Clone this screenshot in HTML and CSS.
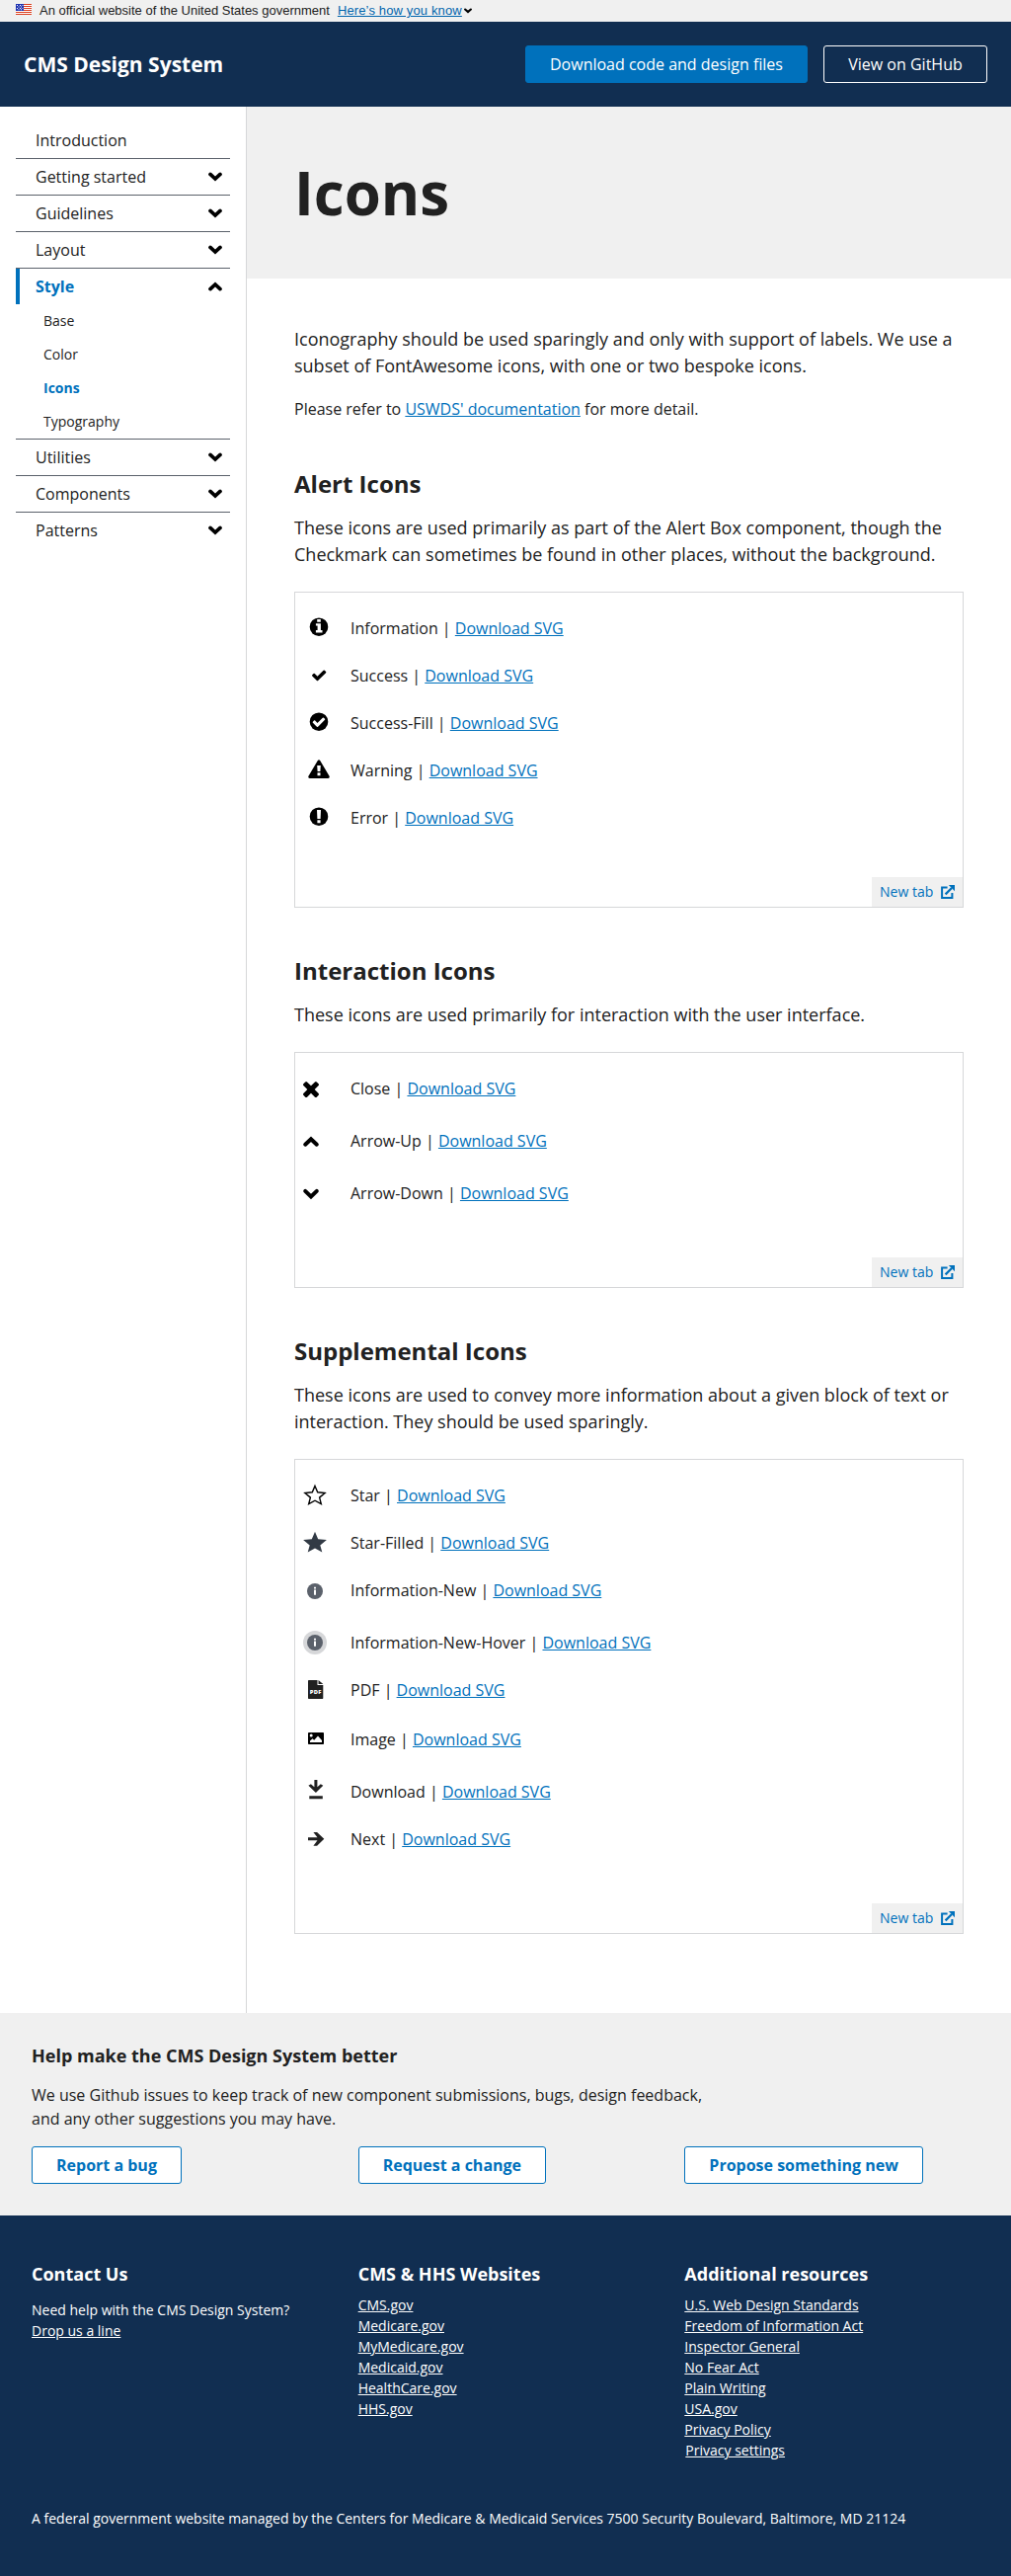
FILE: index.html
```html
<!DOCTYPE html>
<html lang="en">
<head>
<meta charset="utf-8">
<title>Icons - CMS Design System</title>
<link rel="stylesheet" href="styles.css">
</head>
<body>
<svg class="sprite" aria-hidden="true">
  <symbol id="chevron-down" viewBox="0 0 14 10"><path d="M2 2.4 7 7l5-4.6" fill="none" stroke="#000" stroke-width="3.7" stroke-linecap="round"/></symbol>
  <symbol id="external" viewBox="0 0 14 14"><path d="M6.600 2.600H1.100v10.300h10.300V8" fill="none" stroke="currentColor" stroke-width="2"/><path d="M4.600 9.400 11 3" fill="none" stroke="currentColor" stroke-width="2.200"/><path d="M7.800 0H14v6.200z" fill="currentColor"/></symbol>
</svg>

<div class="banner">
  <svg class="banner-flag" viewBox="0 0 16 11">
    <path fill="#fff" d="M0 0h16v11H0z"/>
    <path fill="#db3e1f" d="M0 0h16v1H0zM0 2h16v1H0zM0 4h16v1H0zM0 6h16v1H0zM0 8h16v1H0zM0 10h16v1H0z"/>
    <path fill="#1e33b1" d="M0 0h8v7H0z"/>
    <path fill="#fff" d="M1 1h1v1H1zM4 1h1v1H4zM6.500 1h.8v1h-.8zM2.500 2.500h1v1h-1zM5 2.500h1v1H5zM1 4h1v1H1zM4 4h1v1H4zM6.500 4h.8v1h-.8zM2.500 5.300h1v1h-1zM5 5.300h1v1H5z"/>
  </svg>
  <span class="banner-text">An official website of the United States government</span>
  <a class="banner-link" href="#">Here’s how you know</a>
  <svg class="banner-chevron"><use href="#chevron-down"/></svg>
</div>

<header class="header">
  <div class="header-title">CMS Design System</div>
  <div class="header-actions">
    <a class="button button-primary" href="#">Download code and design files</a>
    <a class="button button-inverse" href="#">View on GitHub</a>
  </div>
</header>

<div class="layout">
  <nav class="sidebar">
    <ul class="nav">
      <li><a class="nav-item" href="#">Introduction</a></li>
      <li><a class="nav-item" href="#">Getting started<svg class="nav-chevron"><use href="#chevron-down"/></svg></a></li>
      <li><a class="nav-item" href="#">Guidelines<svg class="nav-chevron"><use href="#chevron-down"/></svg></a></li>
      <li><a class="nav-item" href="#">Layout<svg class="nav-chevron"><use href="#chevron-down"/></svg></a></li>
      <li>
        <a class="nav-item nav-item-current" href="#">Style<svg class="nav-chevron nav-chevron-open"><use href="#chevron-down"/></svg></a>
        <ul class="subnav">
          <li><a class="subnav-item" href="#">Base</a></li>
          <li><a class="subnav-item" href="#">Color</a></li>
          <li><a class="subnav-item subnav-item-current" href="#">Icons</a></li>
          <li><a class="subnav-item" href="#">Typography</a></li>
        </ul>
      </li>
      <li><a class="nav-item" href="#">Utilities<svg class="nav-chevron"><use href="#chevron-down"/></svg></a></li>
      <li><a class="nav-item" href="#">Components<svg class="nav-chevron"><use href="#chevron-down"/></svg></a></li>
      <li><a class="nav-item" href="#">Patterns<svg class="nav-chevron"><use href="#chevron-down"/></svg></a></li>
    </ul>
  </nav>

  <main class="main">
    <div class="hero"><h1>Icons</h1></div>
    <div class="content">
      <p class="lead">Iconography should be used sparingly and only with support of labels. We use a subset of FontAwesome icons, with one or two bespoke icons.</p>
      <p class="note">Please refer to <a href="#">USWDS' documentation</a> for more detail.</p>

      <section class="section">
        <h2>Alert Icons</h2>
        <p class="lead">These icons are used primarily as part of the Alert Box component, though the Checkmark can sometimes be found in other places, without the background.</p>
        <div class="example">
          <ul class="icons icons-alert">
            <li><svg class="icon" viewBox="0 0 24 24"><circle cx="12" cy="10.700" r="9.300"/><path fill="#fff" d="M10.200 3h3.600v2.700h-3.600zM8.900 7.200h5v6.800h1.600v2.400H8.900V14h1.700V9.600H8.900z"/></svg><span>Information | <a href="#">Download SVG</a></span></li>
            <li><svg class="icon" viewBox="0 0 24 24"><path transform="translate(3.900 3.300) scale(.00923)" d="M1671 566q0 40-28 68l-724 724-136 136q-28 28-68 28t-68-28l-136-136-362-362q-28-28-28-68t28-68l136-136q28-28 68-28t68 28l294 295 656-657q28-28 68-28t68 28l136 136q28 28 28 68z"/></svg><span>Success | <a href="#">Download SVG</a></span></li>
            <li><svg class="icon" viewBox="0 0 24 24"><circle cx="12" cy="10.700" r="9.300"/><path fill="#fff" transform="translate(4.700 3.700) scale(.0081)" d="M1671 566q0 40-28 68l-724 724-136 136q-28 28-68 28t-68-28l-136-136-362-362q-28-28-28-68t28-68l136-136q28-28 68-28t68 28l294 295 656-657q28-28 68-28t68 28l136 136q28 28 28 68z"/></svg><span>Success-Fill | <a href="#">Download SVG</a></span></li>
            <li><svg class="icon" viewBox="0 0 24 24"><path d="M10.800 1.900q1.200-1.400 2.400 0l9.500 16.200q.6 1.700-1.200 1.900h-19q-1.800-.2-1.200-1.900z"/><path fill="#fff" d="M10.200 7h3.600l-.4 6h-2.800zM10.500 14.300h3v2.900h-3z"/></svg><span>Warning | <a href="#">Download SVG</a></span></li>
            <li><svg class="icon" viewBox="0 0 24 24"><circle cx="12" cy="10.700" r="9.300"/><path fill="#fff" d="M10 4h4l-.4 8.900h-3.200zM10.400 14.200h3.200v3h-3.200z"/></svg><span>Error | <a href="#">Download SVG</a></span></li>
          </ul>
          <a class="new-tab" href="#">New tab<svg class="new-tab-icon"><use href="#external"/></svg></a>
        </div>
      </section>

      <section class="section">
        <h2>Interaction Icons</h2>
        <p class="lead">These icons are used primarily for interaction with the user interface.</p>
        <div class="example">
          <ul class="icons icons-interaction">
            <li><svg class="icon" viewBox="0 0 24 24"><path transform="translate(-.07 .07) scale(.01347)" d="M1490 1322q0 40-28 68l-136 136q-28 28-68 28t-68-28l-294-294-294 294q-28 28-68 28t-68-28l-136-136q-28-28-28-68t28-68l294-294-294-294q-28-28-28-68t28-68l136-136q28-28 68-28t68 28l294 294 294-294q28-28 68-28t68 28l136 136q28 28 28 68t-28 68l-294 294 294 294q28 28 28 68z"/></svg><span>Close | <a href="#">Download SVG</a></span></li>
            <li><svg class="icon icon-line" viewBox="0 0 24 24"><path stroke-width="4" d="M6.200 15.700 12 10.200l5.800 5.500"/></svg><span>Arrow-Up | <a href="#">Download SVG</a></span></li>
            <li><svg class="icon icon-line" viewBox="0 0 24 24"><path stroke-width="4" d="M6.200 9.900 12 15.400l5.800-5.500"/></svg><span>Arrow-Down | <a href="#">Download SVG</a></span></li>
          </ul>
          <a class="new-tab" href="#">New tab<svg class="new-tab-icon"><use href="#external"/></svg></a>
        </div>
      </section>

      <section class="section">
        <h2>Supplemental Icons</h2>
        <p class="lead">These icons are used to convey more information about a given block of text or interaction. They should be used sparingly.</p>
        <div class="example">
          <ul class="icons icons-supplemental">
            <li><svg class="icon" viewBox="0 0 24 24"><path fill="none" stroke="#000" stroke-width="1.400" d="m12 2.400 2.700 6.400 7.400.7-5.500 4.600 1.700 6.600-6.300-3.500-6.300 3.500 1.700-6.600-5.500-4.600 7.400-.7z"/></svg><span>Star | <a href="#">Download SVG</a></span></li>
            <li><svg class="icon" viewBox="0 0 24 24"><path fill="#323a45" d="m12 .7 3.200 7.500 8.700.8-6.600 5.400 2 7.200-7.300-4-7.300 4 2-7.200L.1 9l8.700-.8z"/></svg><span>Star-Filled | <a href="#">Download SVG</a></span></li>
            <li><svg class="icon" viewBox="0 0 24 24"><circle cx="12" cy="13" r="8" fill="#5b616b"/><path fill="#fff" d="M11 8.800h2v1.700h-2zM11 11.400h2v5.300h-2z"/></svg><span>Information-New | <a href="#">Download SVG</a></span></li>
            <li class="space-large"><svg class="icon" viewBox="0 0 24 24"><circle cx="12" cy="12" r="12" fill="#d6d7d9"/><circle cx="12" cy="12" r="8" fill="#5b616b"/><path fill="#fff" d="M11 7.800h2v1.700h-2zM11 10.400h2v5.300h-2z"/></svg><span>Information-New-Hover | <a href="#">Download SVG</a></span></li>
            <li><svg class="icon" viewBox="0 0 24 24"><path fill="#212121" d="M5.800 2h8.700v5h5.800v13.300q0 .7-.7.700H5.800q-.8 0-.8-.7V2.700q0-.7.800-.7zM15.500 2l4.800 4h-4.800z"/><text class="icon-label" x="12.800" y="15.900" text-anchor="middle">PDF</text></svg><span>PDF | <a href="#">Download SVG</a></span></li>
            <li class="space-medium"><svg class="icon" viewBox="0 0 24 24"><rect x="5" y="5" width="16" height="12" rx=".8"/><circle cx="8.200" cy="8" r="1.500" fill="#fff"/><path fill="#fff" d="M7 15v-1.500l2.500-2.300 1.700 1.500L15 8.500l4 4.500v2z"/></svg><span>Image | <a href="#">Download SVG</a></span></li>
            <li class="space-large"><svg class="icon" viewBox="0 0 24 24"><path fill="#212121" d="M11.400 0h3v7.200l3.400-3 2.500 1.600-7.400 7.200-7.500-7.200 2.500-1.600 3.500 3zM6.300 16.300h13.500v3H6.300z"/></svg><span>Download | <a href="#">Download SVG</a></span></li>
            <li><svg class="icon" viewBox="0 0 24 24"><path fill="#212121" d="M5 10.300h9.500L10.400 5h3.700l7.200 6.800-7.200 6.900h-3.700l4.100-5.400H5z"/></svg><span>Next | <a href="#">Download SVG</a></span></li>
          </ul>
          <a class="new-tab" href="#">New tab<svg class="new-tab-icon"><use href="#external"/></svg></a>
        </div>
      </section>
    </div>
  </main>
</div>

<section class="feedback">
  <h3>Help make the CMS Design System better</h3>
  <p>We use Github issues to keep track of new component submissions, bugs, design feedback, and any other suggestions you may have.</p>
  <div class="columns">
    <div><a class="button button-outline" href="#">Report a bug</a></div>
    <div><a class="button button-outline" href="#">Request a change</a></div>
    <div><a class="button button-outline" href="#">Propose something new</a></div>
  </div>
</section>

<footer class="footer">
  <div class="columns footer-columns">
    <div>
      <h3>Contact Us</h3>
      <p class="footer-contact">Need help with the CMS Design System?<br><a href="#">Drop us a line</a></p>
    </div>
    <div>
      <h3>CMS &amp; HHS Websites</h3>
      <ul>
        <li><a href="#">CMS.gov</a></li>
        <li><a href="#">Medicare.gov</a></li>
        <li><a href="#">MyMedicare.gov</a></li>
        <li><a href="#">Medicaid.gov</a></li>
        <li><a href="#">HealthCare.gov</a></li>
        <li><a href="#">HHS.gov</a></li>
      </ul>
    </div>
    <div>
      <h3>Additional resources</h3>
      <ul>
        <li><a href="#">U.S. Web Design Standards</a></li>
        <li><a href="#">Freedom of Information Act</a></li>
        <li><a href="#">Inspector General</a></li>
        <li><a href="#">No Fear Act</a></li>
        <li><a href="#">Plain Writing</a></li>
        <li><a href="#">USA.gov</a></li>
        <li><a href="#">Privacy Policy</a></li>
        <li class="privacy-settings"><a href="#">Privacy settings</a></li>
      </ul>
    </div>
  </div>
  <p class="footer-address">A federal government website managed by the Centers for Medicare &amp; Medicaid Services 7500 Security Boulevard, Baltimore, MD 21124</p>
</footer>
</body>
</html>
```
FILE: styles.css
```css
* { box-sizing: border-box; }

body {
  margin: 0;
  background: #fff;
  color: #212121;
  font: 16px/24px "Open Sans", sans-serif;
}

h1, h2, h3, p, ul { margin: 0; padding: 0; }
ul { list-style: none; }
svg { display: block; flex: none; }
a { color: #0071bc; }

.sprite { width: 0; height: 0; position: absolute; }

/* Government banner */
.banner {
  display: flex;
  align-items: center;
  height: 22px;
  padding: 0 16px;
  background: #f0f0f0;
  font: 13px/16px "Liberation Sans", Arial, sans-serif;
  white-space: nowrap;
}
.banner-flag { width: 16px; height: 11px; margin: -3px 8px 0 0; }
.banner-link { margin-left: 8px; color: #0065ad; letter-spacing: .14px; }
.banner-chevron { width: 8px; height: 6px; margin-left: 2px; }

/* Header */
.header {
  display: flex;
  align-items: center;
  justify-content: space-between;
  height: 86px;
  padding: 0 24px;
  background: #112e51;
}
.header-title { color: #fff; font-size: 21px; font-weight: 700; }
.header-actions { display: flex; gap: 16px; }

.button {
  display: inline-block;
  height: 38px;
  padding: 6px 24px;
  border: 1px solid #0071bc;
  border-radius: 3px;
  text-align: center;
  text-decoration: none;
  white-space: nowrap;
}
.button-primary { width: 286px; background: #0071bc; color: #fff; }
.button-inverse { width: 166px; border-color: #fff; color: #fff; }
.button-outline { background: #fff; font-weight: 700; }

/* Layout */
.layout { display: flex; }
.sidebar {
  width: 250px;
  flex: none;
  padding: 16px 16px 0;
  border-right: 1px solid #d6d7d9;
}
.nav > li + li { border-top: 1px solid #5b616b; }
.nav-item {
  display: flex;
  align-items: center;
  justify-content: space-between;
  height: 36px;
  padding: 0 8px 0 20px;
  color: #212121;
  text-decoration: none;
}
.nav-item-current {
  padding-left: 16px;
  border-left: 4px solid #0071bc;
  color: #0071bc;
  font-weight: 700;
}
.nav-chevron { width: 14px; height: 10px; }
.nav-chevron-open { transform: rotate(180deg); }
.subnav-item {
  display: flex;
  align-items: center;
  height: 34px;
  padding-left: 28px;
  color: #212121;
  font-size: 14px;
  text-decoration: none;
}
.subnav-item-current { color: #0071bc; font-weight: 700; }

.main { flex: 1; min-width: 0; }
.hero {
  display: flex;
  align-items: center;
  height: 174px;
  padding: 0 48px;
  background: #f0f0f0;
}
h1 { font-size: 60px; line-height: 78px; font-weight: 700; }
.content { padding: 48px 48px 80px; }
.lead { font-size: 18px; line-height: 27px; }
.note { margin-top: 18px; }

.section { margin-top: 48px; }
.section h2 { margin-bottom: 16px; font-size: 24px; line-height: 31px; font-weight: 700; }

/* Example box */
.example {
  display: flex;
  flex-direction: column;
  margin-top: 24px;
  padding-top: 24px;
  border: 1px solid #d6d7d9;
}
.icons { --slot: 48px; --row-gap: 24px; margin-bottom: 48px; }
.icons-interaction { --slot: 32px; --row-gap: 29px; margin-bottom: 53px; }
.icons-supplemental { --slot: 40px; margin-bottom: 53px; }
.icons li {
  display: grid;
  grid-template-columns: var(--slot) 1fr;
  align-items: center;
  column-gap: calc(56px - var(--slot));
  height: 24px;
}
.icons li + li { margin-top: var(--row-gap); }
.icons .space-medium { --row-gap: 26px; }
.icons .space-large { --row-gap: 29px; }
.icon { width: 24px; height: 24px; justify-self: center; }
.icon-line { fill: none; stroke: #000; stroke-linecap: round; }
.icon-label { fill: #fff; font: 800 5.800px "Open Sans", sans-serif; letter-spacing: .3px; }

.new-tab {
  display: flex;
  align-items: center;
  justify-content: space-between;
  align-self: flex-end;
  width: 92px;
  height: 30px;
  padding: 0 8px;
  background: #f0f0f0;
  font-size: 14px;
  text-decoration: none;
}
.new-tab-icon { width: 14px; height: 14px; }

/* Feedback */
.feedback { padding: 32px; background: #f0f0f0; }
h3 { font-size: 18px; line-height: 23px; font-weight: 700; }
.feedback p { width: 700px; margin: 16px 0; }
.columns {
  display: grid;
  grid-template-columns: repeat(3, 1fr);
  column-gap: 32px;
}
.feedback .button { display: block; width: fit-content; }

/* Footer */
.footer {
  height: 365px;
  padding: 48px 32px 0;
  background: #112e51;
  color: #fff;
  font-size: 14px;
  line-height: 21px;
}
.footer a { color: #fff; }
.footer-columns { height: 248px; align-items: start; }
.footer-contact { margin-top: 14px; }
.footer ul { margin-top: 9px; }
.privacy-settings { padding-left: 1px; }
```
